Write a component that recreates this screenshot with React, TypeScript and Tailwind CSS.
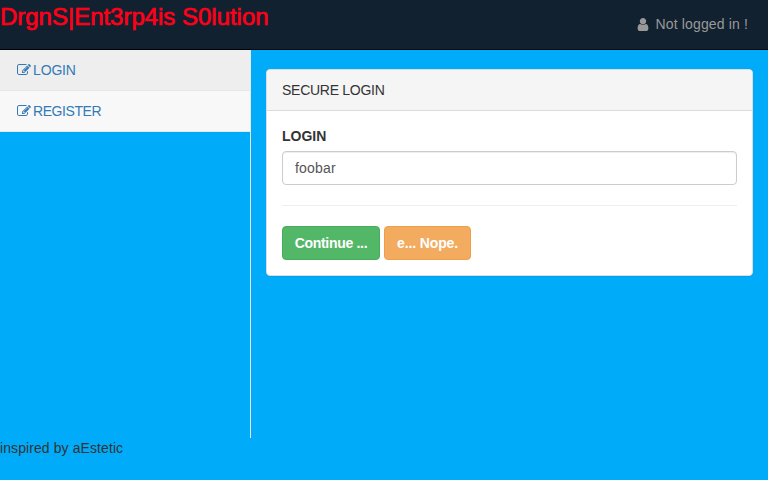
import React from "react";

function EditIcon() {
  return (
    <svg className="h-[14px] w-[14px] shrink-0" viewBox="0 0 1792 1792" fill="currentColor">
      <path d="M888 1184l116-116-152-152-116 116v56h96v96h56zm440-720q-16-16-33 1l-350 350q-17 17-1 33t33-1l350-350q17-17 1-33zm80 594v190q0 119-84.5 203.5t-203.5 84.5h-832q-119 0-203.5-84.5t-84.5-203.5v-832q0-119 84.5-203.5t203.5-84.5h832q63 0 117 25 15 7 18 23 3 17-9 29l-49 49q-14 14-32 8-23-6-45-6h-832q-66 0-113 47t-47 113v832q0 66 47 113t113 47h832q66 0 113-47t47-113v-126q0-13 9-22l64-64q15-15 35-7t20 29zm-96-738l288 288-672 672h-288v-288zm444 132l-92 92-288-288 92-92q28-28 68-28t68 28l152 152q28 28 28 68t-28 68z" />
    </svg>
  );
}

function UserIcon() {
  return (
    <svg className="h-[15px] w-[12px] shrink-0" viewBox="192 0 1408 1792" fill="currentColor">
      <path d="M1536 1399q0 109-62.5 187t-150.5 78h-854q-88 0-150.5-78t-62.5-187q0-85 8.5-160.5t31.5-152 58.5-131 94-89 134.5-34.5q131 128 313 128t313-128q76 0 134.5 34.5t94 89 58.5 131 31.5 152 8.5 160.5zm-256-887q0 159-112.5 271.5t-271.5 112.5-271.5-112.5-112.5-271.5 112.5-271.5 271.5-112.5 271.5 112.5 112.5 271.5z" />
    </svg>
  );
}

export default function App() {
  return (
    <div className="flex h-[480px] w-full flex-col overflow-hidden bg-[#00abfa] font-['Liberation_Sans',Arial,sans-serif] text-[14px] leading-5 text-[#333]">
      <header className="flex h-[50px] shrink-0 items-start justify-between border-b border-[#020507] bg-[#112130]">
        <h1 className="pt-[3px] text-[24px] leading-[27px] tracking-[-0.02px] text-[#ff0019] [-webkit-text-stroke:0.7px_#ff0019]">
          DrgnS|Ent3rp4is S0lution
        </h1>
        <div className="flex items-center pt-[14px] pr-[20px] text-[#999]">
          <UserIcon />
          <span className="ml-[7px] tracking-[0.14px]">Not logged in !</span>
        </div>
      </header>
      <div className="flex h-[388px] shrink-0">
        <nav className="w-[251px] shrink-0 border-r border-[#e7e7e7] text-[#337ab7]">
          <a className="flex h-[41px] items-center gap-[2px] border-b border-[#e7e7e7] bg-[#eee] pl-[17px]">
            <EditIcon />
            <span className="tracking-[-0.15px]">LOGIN</span>
          </a>
          <a className="flex h-[41px] items-center gap-[2px] border-b border-[#e7e7e7] bg-[#f8f8f8] pl-[17px]">
            <EditIcon />
            <span className="tracking-[-0.42px]">REGISTER</span>
          </a>
        </nav>
        <main className="flex-1 pt-[19px] pr-[15px] pl-[15px]">
          <section className="h-[207px] rounded-[4px] border border-[#ddd] bg-white shadow-[0_1px_1px_rgba(0,0,0,0.05)]">
            <div className="h-[41px] rounded-t-[3px] border-b border-[#ddd] bg-[#f5f5f5] px-[15px] py-[10px] tracking-[-0.27px]">
              SECURE LOGIN
            </div>
            <form className="p-[15px]">
              <label className="mb-[5px] block font-bold">LOGIN</label>
              <input
                readOnly
                value="foobar"
                className="block h-[34px] w-full rounded-[4px] border border-[#ccc] bg-white px-3 tracking-[0.2px] text-[#555] shadow-[inset_0_1px_1px_rgba(0,0,0,0.075)] outline-none"
              />
              <hr className="my-5 border-t border-[#eee]" />
              <div className="flex gap-1 font-bold text-white">
                <button type="button" className="h-[34px] w-[98px] rounded-[4px] border border-[#47ad5d] bg-[#53b768] tracking-[-0.3px]">
                  Continue ...
                </button>
                <button type="button" className="h-[34px] w-[87px] rounded-[4px] border border-[#f19f47] bg-[#f3ab5f] tracking-[-0.12px]">
                  e... Nope.
                </button>
              </div>
            </form>
          </section>
        </main>
      </div>
      <footer className="tracking-[0.09px]">inspired by aEstetic</footer>
    </div>
  );
}
